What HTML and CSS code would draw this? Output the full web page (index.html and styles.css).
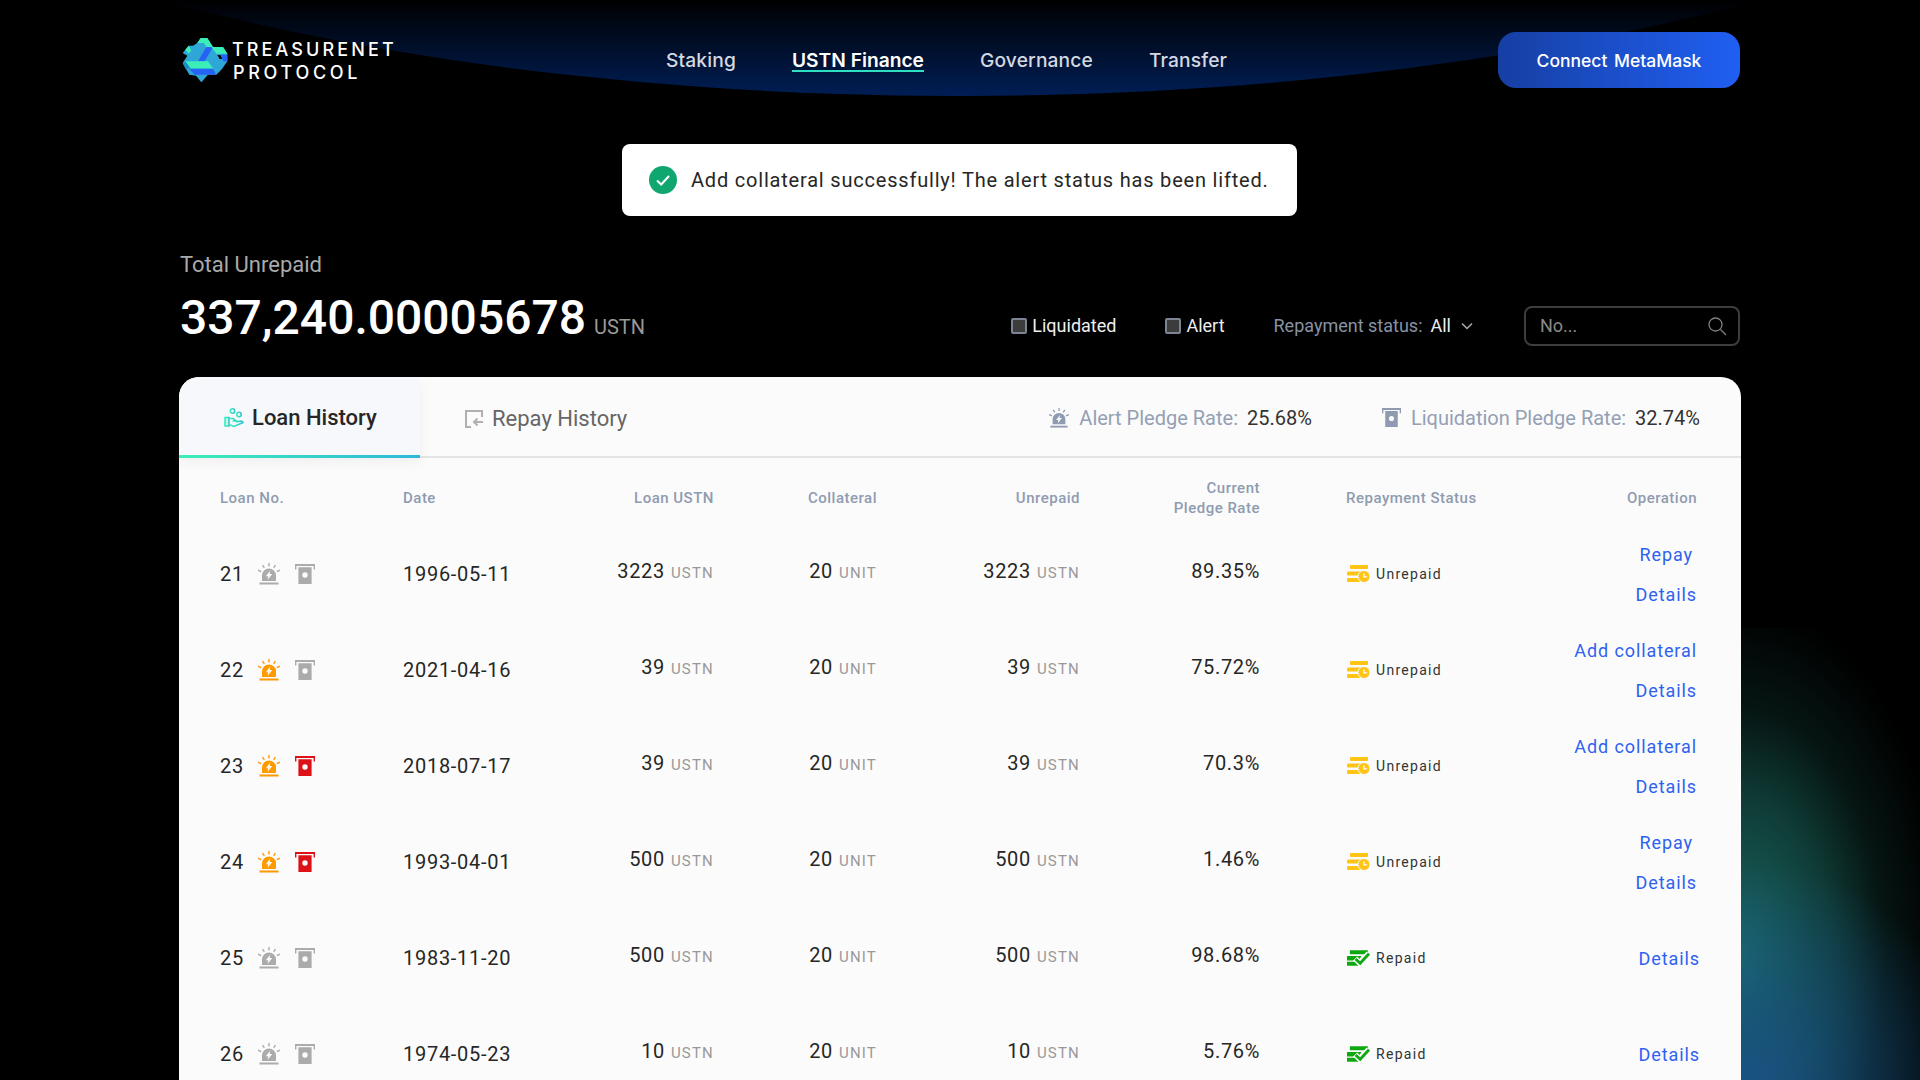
FILE: index.html
```html
<!DOCTYPE html>
<html lang="en">
<head>
<meta charset="utf-8">
<title>TreasureNet Protocol</title>
<link rel="stylesheet" href="styles.css">
</head>
<body>
<svg class="defs" width="0" height="0" aria-hidden="true">
  <defs>
    <linearGradient id="mintgrad" x1="0" y1="0" x2="1" y2="0"><stop offset="0" stop-color="#3beeb8"/><stop offset="1" stop-color="#30c6d4"/></linearGradient>
    <symbol id="alarm" viewBox="0 0 22 22">
      <path fill="currentColor" fill-rule="evenodd" d="M4 18v-5.500a7 7 0 0 1 14 0V18zM12.300 7.500 7.800 13.200h2.500l-.7 3.800 4.600-5.900h-2.600z"/>
      <rect fill="currentColor" x="1.500" y="19.500" width="19" height="2"/>
      <path fill="none" stroke="currentColor" stroke-width="1.400" d="M11 0v3.400M4.600 2l1.700 2.800M17.400 2l-1.700 2.800M.2 7.200l3 1.500M21.800 7.200l-3 1.500"/>
    </symbol>
    <symbol id="liq" viewBox="0 0 20 20">
      <path fill="currentColor" d="M0 0h20v5.500h-1.400V2H1.400V5.500H0z"/>
      <path fill="currentColor" fill-rule="evenodd" d="M3.400 3.200h13.200V20H3.400zM10 8.300a2.700 2.700 0 1 0 0 5.400 2.700 2.700 0 0 0 0-5.400z"/>
    </symbol>
    <symbol id="unpaid" viewBox="0 0 23 18">
      <rect fill="currentColor" x="3" y="0" width="18" height="4" rx="1"/>
      <rect fill="currentColor" x="0" y="6.500" width="14" height="4" rx="1"/>
      <rect fill="currentColor" x="0" y="13" width="13" height="4" rx="1"/>
      <circle fill="currentColor" stroke="#fbfbfb" stroke-width="1" cx="17" cy="11.500" r="6"/>
      <path fill="none" stroke="#fbfbfb" stroke-width="1.300" d="M17 8.500v3.400h3"/>
    </symbol>
    <symbol id="paid" viewBox="0 0 24 16">
      <path fill="currentColor" d="M3 0h19l-1.500 4H3zM0 6h15l-2.500 4.500H0zM0 12h11l2 4H0z"/>
      <path fill="none" stroke="#fbfbfb" stroke-width="6" d="M8.500 8.500l5 5 9-10"/>
      <path fill="none" stroke="currentColor" stroke-width="3" d="M9 9l4.800 4.500 9.200-10"/>
    </symbol>
  </defs>
</svg>

<div class="backdrop">
  <div class="arc"></div>
  <div class="glow"></div>
</div>

<div class="page">
  <header class="topbar">
    <div class="brand">
      <svg class="logo" viewBox="0 0 162 162" width="54" height="54" aria-hidden="true">
        <path fill="#2ea6d8" d="M68 15h20l17 27h30l13 20v23l-16 23-17 17H90l-20 23-16-20-20-3-20-35 14-22-14-8 18-22h13l13-8z"/>
        <path fill="#3beeb8" d="M22 50l10-12 8 14-8 10z"/>
        <path fill="#3beeb8" d="M58 30 68 15h20l17 27H85l-7-12z"/>
        <path fill="#2563f5" d="M85 42h20L80 85H60z"/>
        <path fill="#3beeb8" d="M100 42h35l13 20h-33z"/>
        <path fill="#000" d="M118 66h9l7 12h-9z"/>
        <path fill="#2563f5" d="M127 65h21v20h-12z"/>
        <path fill="#1d8cc4" d="M14 90l10 20 12-6-12-18z"/>
        <path fill="#3beeb8" d="M22 85h68l15 21H38z"/>
        <path fill="#2563f5" d="M34 108h71l10 17H50z"/>
      </svg>
      <div class="brand-text"><span class="brand-a">TREASURENET</span><span class="brand-b">PROTOCOL</span></div>
    </div>
    <nav class="nav">
      <a class="nav-item">Staking</a>
      <a class="nav-item active">USTN Finance</a>
      <a class="nav-item">Governance</a>
      <a class="nav-item">Transfer</a>
    </nav>
    <button class="connect">Connect MetaMask</button>
  </header>

  <div class="toast">
    <svg class="toast-icon" viewBox="0 0 28 28" width="28" height="28" aria-hidden="true"><circle cx="14" cy="14" r="14" fill="#0fa76f"/><path d="M8 14.500l4.200 4L20 10" fill="none" stroke="#fff" stroke-width="2"/></svg>
    <span>Add collateral successfully! The alert status has been lifted.</span>
  </div>

  <section class="summary">
    <div class="summary-title">Total Unrepaid</div>
    <div class="summary-row">
      <div class="amount"><span class="amount-num">337,240.00005678</span><span class="amount-unit">USTN</span></div>
      <div class="filters">
        <label class="check"><i class="box"></i>Liquidated</label>
        <label class="check"><i class="box"></i>Alert</label>
        <div class="select"><span class="select-label">Repayment status:</span><span class="select-value">All</span>
          <svg viewBox="0 0 12 8" width="12" height="8" aria-hidden="true"><path d="M1 1.500l5 5 5-5" fill="none" stroke="#aaa" stroke-width="1.500"/></svg>
        </div>
        <div class="search"><span class="search-text">No...</span>
          <svg viewBox="0 0 20 20" width="20" height="20" aria-hidden="true"><circle cx="8.500" cy="8.500" r="6.500" fill="none" stroke="#808080" stroke-width="1.300"/><path d="M13.500 13.500l5.500 5.500" stroke="#808080" stroke-width="1.300"/></svg>
        </div>
      </div>
    </div>
  </section>

  <section class="card">
    <div class="tabs">
      <div class="tab active">
        <svg viewBox="0 0 20 20" width="20" height="20" fill="none" stroke="url(#mintgrad)" stroke-width="1.600" aria-hidden="true"><circle cx="8.500" cy="3" r="2.200"/><circle cx="15" cy="6.500" r="2.200"/><path fill="#3beeb8" fill-opacity=".25" d="M1 9.500h4v8.500H1z"/><path d="M5 10.500h4l3.500 2.500H8.500M5 16.500l5 2 9-4c-1-2.500-3-1.500-7-.5"/></svg>
        <span>Loan History</span>
      </div>
      <div class="tab">
        <svg viewBox="0 0 18 18" width="18" height="18" fill="none" stroke="#b0b0b0" stroke-width="2" aria-hidden="true"><path d="M17 7V1H1v16h5"/><path d="M18 12H9M12.500 8.500 9 12l3.500 3.500"/></svg>
        <span>Repay History</span>
      </div>
      <div class="rates">
        <div class="rate"><svg class="ico-rate-a"><use href="#alarm"/></svg><span class="rate-label">Alert Pledge Rate:</span><span class="rate-val">25.68%</span></div>
        <div class="rate"><svg class="ico-rate-l"><use href="#liq"/></svg><span class="rate-label">Liquidation Pledge Rate:</span><span class="rate-val">32.74%</span></div>
      </div>
    </div>

    <div class="grid head">
      <div>Loan No.</div>
      <div>Date</div>
      <div class="r">Loan USTN</div>
      <div class="r">Collateral</div>
      <div class="r">Unrepaid</div>
      <div class="r">Current<br>Pledge Rate</div>
      <div class="status-head">Repayment Status</div>
      <div class="r">Operation</div>
    </div>

    <div class="grid row">
      <div class="no"><span class="no-num">21</span><svg class="ico-a off"><use href="#alarm"/></svg><svg class="ico-l off"><use href="#liq"/></svg></div>
      <div class="date">1996-05-11</div>
      <div class="num">3223<small>USTN</small></div>
      <div class="num">20<small>UNIT</small></div>
      <div class="num">3223<small>USTN</small></div>
      <div class="num">89.35%</div>
      <div class="status"><svg class="ico-s yellow"><use href="#unpaid"/></svg>Unrepaid</div>
      <div class="ops"><a>Repay</a><a>Details</a></div>
    </div>
    <div class="grid row">
      <div class="no"><span class="no-num">22</span><svg class="ico-a warn"><use href="#alarm"/></svg><svg class="ico-l off"><use href="#liq"/></svg></div>
      <div class="date">2021-04-16</div>
      <div class="num">39<small>USTN</small></div>
      <div class="num">20<small>UNIT</small></div>
      <div class="num">39<small>USTN</small></div>
      <div class="num">75.72%</div>
      <div class="status"><svg class="ico-s yellow"><use href="#unpaid"/></svg>Unrepaid</div>
      <div class="ops wide"><a>Add collateral</a><a>Details</a></div>
    </div>
    <div class="grid row">
      <div class="no"><span class="no-num">23</span><svg class="ico-a warn"><use href="#alarm"/></svg><svg class="ico-l danger"><use href="#liq"/></svg></div>
      <div class="date">2018-07-17</div>
      <div class="num">39<small>USTN</small></div>
      <div class="num">20<small>UNIT</small></div>
      <div class="num">39<small>USTN</small></div>
      <div class="num">70.3%</div>
      <div class="status"><svg class="ico-s yellow"><use href="#unpaid"/></svg>Unrepaid</div>
      <div class="ops wide"><a>Add collateral</a><a>Details</a></div>
    </div>
    <div class="grid row">
      <div class="no"><span class="no-num">24</span><svg class="ico-a warn"><use href="#alarm"/></svg><svg class="ico-l danger"><use href="#liq"/></svg></div>
      <div class="date">1993-04-01</div>
      <div class="num">500<small>USTN</small></div>
      <div class="num">20<small>UNIT</small></div>
      <div class="num">500<small>USTN</small></div>
      <div class="num">1.46%</div>
      <div class="status"><svg class="ico-s yellow"><use href="#unpaid"/></svg>Unrepaid</div>
      <div class="ops"><a>Repay</a><a>Details</a></div>
    </div>
    <div class="grid row">
      <div class="no"><span class="no-num">25</span><svg class="ico-a off"><use href="#alarm"/></svg><svg class="ico-l off"><use href="#liq"/></svg></div>
      <div class="date">1983-11-20</div>
      <div class="num">500<small>USTN</small></div>
      <div class="num">20<small>UNIT</small></div>
      <div class="num">500<small>USTN</small></div>
      <div class="num">98.68%</div>
      <div class="status"><svg class="ico-s green"><use href="#paid"/></svg>Repaid</div>
      <div class="ops single"><a>Details</a></div>
    </div>
    <div class="grid row">
      <div class="no"><span class="no-num">26</span><svg class="ico-a off"><use href="#alarm"/></svg><svg class="ico-l off"><use href="#liq"/></svg></div>
      <div class="date">1974-05-23</div>
      <div class="num">10<small>USTN</small></div>
      <div class="num">20<small>UNIT</small></div>
      <div class="num">10<small>USTN</small></div>
      <div class="num">5.76%</div>
      <div class="status"><svg class="ico-s green"><use href="#paid"/></svg>Repaid</div>
      <div class="ops single"><a>Details</a></div>
    </div>
  </section>
</div>
</body>
</html>
```
FILE: styles.css
```css
* { box-sizing: border-box; }
html, body { margin: 0; height: 1080px; overflow: hidden; }
body { background: #000; font-family: Roboto, "Liberation Sans", sans-serif; color: #fff; position: relative; }
.defs { position: absolute; }

.backdrop { position: absolute; left: 0; top: 0; width: 1920px; height: 1080px; overflow: hidden; }
.arc {
  position: absolute; left: -361px; top: -844px; width: 2642px; height: 940px; border-radius: 50%;
  background: linear-gradient(180deg, #000 844px, #001e55 940px);
}
.glow {
  position: absolute; right: 0; top: 628px; width: 500px; height: 452px;
  background:
    radial-gradient(circle 240px at 321px 472px, rgba(26,84,140,.95), rgba(26,84,140,0)),
    radial-gradient(ellipse 205px 360px at 321px 332px, #1a6a66, rgba(16,62,56,.95) 45%, rgba(8,30,26,.7) 70%, rgba(0,0,0,0));
}

.page { position: relative; width: 1562px; margin: 0 auto; }

.topbar { height: 120px; display: flex; align-items: center; padding-right: 1px; }
.brand { display: flex; align-items: center; width: 488px; margin-left: -1px; }
.brand-text { display: flex; flex-direction: column; padding-top: 2px; font-family: Inter, sans-serif; font-size: 18px; font-weight: 500; line-height: 23px; }
.brand-a { letter-spacing: 3.1px; }
.brand-b { letter-spacing: 3.7px; padding-left: 1px; }
.nav { display: flex; gap: 56px; flex: 1; }
.nav-item { font-family: Inter, sans-serif; font-size: 19.2px; font-weight: 500; letter-spacing: .15px; color: #d4d8e0; line-height: 24px; padding: 0 0 1px; position: relative; }
.nav-item.active { color: #fff; font-weight: 600; letter-spacing: 0; }
.nav-item.active::after { content: ""; position: absolute; left: 0; right: 0; bottom: 1px; height: 2px; background: #2fe0c0; }
.connect {
  width: 242px; height: 56px; border: 0; border-radius: 18px; color: #fff;
  font-family: Inter, sans-serif; font-size: 17.5px; font-weight: 500; word-spacing: 2px;
  background: linear-gradient(90deg, #163fa3, #205ff2);
}

.toast {
  width: 675px; height: 72px; margin: 24px 0 0 443px; background: #fff; border-radius: 8px;
  display: flex; align-items: center; padding-left: 27px; color: #262626;
  font-size: 20px; letter-spacing: .8px;
}
.toast-icon { margin-right: 14px; flex: none; }

.summary { margin-top: 37px; padding: 0 1px; }
.summary-title { font-size: 22px; line-height: 24px; color: #aaa; }
.summary-row { display: flex; justify-content: space-between; align-items: flex-end; margin-top: 11px; height: 60px; }
.amount { display: flex; align-items: baseline; }
.amount-num { font-size: 48px; font-weight: 500; line-height: 60px; }
.amount-unit { font-size: 20px; color: #999; margin-left: 8px; }
.filters { display: flex; align-items: center; height: 40px; margin-bottom: 2px; font-size: 18px; }
.check { display: flex; align-items: center; color: #eee; margin-right: 49px; padding-bottom: 1px; }
.box { width: 16px; height: 16px; border: 2px solid #7a8494; background: #3c3c3c; border-radius: 2px; margin-right: 5px; }
.select { display: flex; align-items: center; padding-bottom: 1px; }
.select-label { color: #8792a4; }
.select-value { color: #eee; margin-left: 8px; }
.select svg { margin-left: 10px; }
.search {
  width: 216px; height: 40px; margin-left: 51px; border: 2px solid #3d3d3d; border-radius: 8px;
  display: flex; align-items: center; justify-content: space-between; padding: 0 11px 0 14px; color: #8a8a8a;
}
.search-text { padding-bottom: 2px; }

.card { margin-top: 29px; height: 703px; background: #fbfbfb; border-radius: 20px 20px 0 0; overflow: hidden; color: #262626; }
.tabs { height: 81px; display: flex; align-items: stretch; border-bottom: 2px solid #e3e3e3; }
.tab { display: flex; align-items: center; gap: 9px; padding: 2px 45px 0; font-size: 22px; color: #666; height: 81px; white-space: nowrap; flex: none; }
.tab.active { width: 241px; gap: 8px; padding: 0 0 0 45px; color: #262626; font-weight: 500; box-shadow: 0 4px 12px rgba(0,0,0,.05); background-color: #f7f8fb; background-image: linear-gradient(90deg, #3beeb8, #2fb8d8); background-size: 100% 3px; background-position: 0 100%; background-repeat: no-repeat; }
.rates { margin-left: auto; display: flex; align-items: center; gap: 70px; padding: 2px 41px 0 0; font-size: 20px; }
.rate { display: flex; align-items: center; }
.rate-label { color: #94a0b4; }
.rate-val { margin-left: 9px; color: #333; }
.ico-rate-a { width: 20px; height: 20px; color: #8f9bb0; margin-right: 10px; }
.ico-rate-l { width: 19px; height: 19px; color: #8f9bb0; margin-right: 10px; }

.grid { display: grid; grid-template-columns: 183px 150px 161px 163px 203px 180px 1fr auto; padding: 0 44px 0 41px; align-items: center; }
.head { height: 68px; padding-top: 12px; font-size: 15px; font-weight: 500; line-height: 20px; color: #8f9bb0; letter-spacing: .5px; }
.r { text-align: right; }
.status-head { padding-left: 86px; }
.row { height: 96px; font-size: 20px; letter-spacing: .65px; }
.no { display: flex; align-items: center; }
.no-num { width: 38px; }
.date { padding-bottom: 1px; letter-spacing: .72px; }
.ico-a { width: 22px; height: 22px; margin-right: 15px; flex: none; }
.ico-l { width: 20px; height: 20px; flex: none; }
.off { color: #ababab; }
.warn { color: #ff9a00; }
.danger { color: #dd1218; }
.num { text-align: right; padding-bottom: 6px; }
.num small { font-size: 15px; color: #999; margin-left: 6px; letter-spacing: 1.2px; }
.status { display: flex; align-items: center; padding-left: 87px; font-size: 14px; color: #333; letter-spacing: 1.3px; }
.ico-s { width: 23px; height: 18px; margin-right: 6px; flex: none; }
.yellow { color: #ffc414; }
.green { color: #10a810; }
.ops { display: flex; flex-direction: column; align-items: center; gap: 16px; color: #2f62f0; line-height: 24px; font-size: 18px; letter-spacing: .9px; padding-top: 1px; }
.ops.wide { align-items: flex-end; }
.ops.single { margin-right: -3px; }
```
